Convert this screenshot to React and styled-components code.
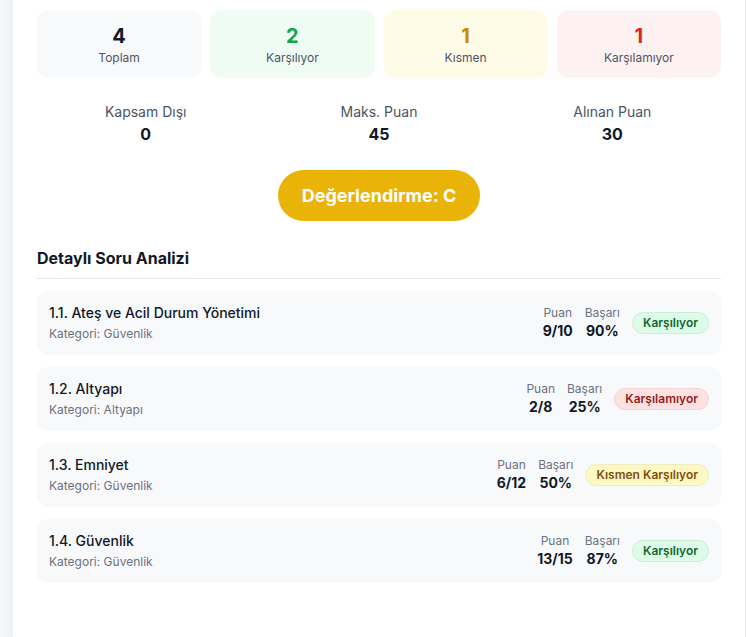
import React from 'react'
import styled, { createGlobalStyle } from 'styled-components'

const GlobalStyle = createGlobalStyle`
  body {
    margin: 0;
    background: #f5f6f8;
    font-family: Inter, "Noto Sans", "Liberation Sans", sans-serif;
    color: #111827;
  }
`;

const Page = styled.div`
  display: flex;
  min-height: 637px;
  padding-left: 13px;
`;

const Panel = styled.div`
  flex: 1;
  background: white;
  border-right: 1px solid #e5e7eb;
  box-shadow: -4px 0 10px rgba(0, 0, 0, 0.04);
  padding: 10px 24px 40px 24px;
`;

const StatGrid = styled.div`
  display: grid;
  grid-template-columns: repeat(4, 1fr);
  gap: 9px;
`;

const tones = {
  gray: { bg: '#f8f9fb', fg: '#111827' },
  green: { bg: '#effcf3', fg: '#16a34a' },
  yellow: { bg: '#fefbe7', fg: '#ca8a04' },
  red: { bg: '#fef1f1', fg: '#dc2626' },
};

const StatCard = styled.div`
  background: ${p => tones[p.$tone].bg};
  border-radius: 12px;
  padding: 12px;
  text-align: center;
`;

const StatNum = styled.div`
  font-size: 20px;
  line-height: 28px;
  font-weight: 700;
  color: ${p => tones[p.$tone].fg};
`;

const StatLabel = styled.div`
  font-size: 12px;
  line-height: 16px;
  color: #4b5563;
`;

const ScoreRow = styled.div`
  display: grid;
  grid-template-columns: repeat(3, 1fr);
  gap: 16px;
  margin-top: 24px;
  text-align: center;
`;

const ScoreLabel = styled.div`
  font-size: 14px;
  line-height: 20px;
  color: #4b5563;
`;

const ScoreValue = styled.div`
  font-size: 16px;
  line-height: 24px;
  font-weight: 700;
  color: #111827;
`;

const GradeWrap = styled.div`
  display: flex;
  justify-content: center;
  margin-top: 24px;
`;

const GradePill = styled.div`
  background: #eab308;
  color: white;
  font-size: 18px;
  line-height: 27px;
  font-weight: 700;
  padding: 12px 24px;
  border-radius: 999px;
`;

const SectionTitle = styled.h3`
  margin: 25px 0 0;
  font-size: 16px;
  line-height: 24px;
  font-weight: 700;
  color: #111827;
  padding-bottom: 8px;
  border-bottom: 1px solid #e2e8f0;
`;

const List = styled.div`
  display: flex;
  flex-direction: column;
  gap: 12px;
  margin-top: 12px;
`;

const Item = styled.div`
  display: flex;
  align-items: center;
  justify-content: space-between;
  background: #f8f9fb;
  border-radius: 10px;
  padding: 12px;
  height: 64px;
  box-sizing: border-box;
`;

const ItemInfo = styled.div`
  align-self: flex-start;
`;

const ItemTitle = styled.div`
  font-size: 14px;
  line-height: 20px;
  font-weight: 500;
  color: #111827;
`;

const ItemCat = styled.div`
  font-size: 12px;
  line-height: 16px;
  color: #6b7280;
  margin-top: 3px;
`;

const Right = styled.div`
  display: flex;
  align-items: center;
  gap: 12px;
`;

const Metric = styled.div`
  text-align: center;
`;

const MetricLabel = styled.div`
  font-size: 12px;
  line-height: 16px;
  color: #6b7280;
`;

const MetricValue = styled.div`
  font-size: 14px;
  line-height: 20px;
  font-weight: 700;
  color: #111827;
`;

const badgeTones = {
  green: { bg: '#dcfce7', fg: '#166534', bd: '#cdeed8' },
  red: { bg: '#fee2e2', fg: '#991b1b', bd: '#f3d6d6' },
  yellow: { bg: '#fef9c3', fg: '#854d0e', bd: '#f0ebc0' },
};

const Badge = styled.span`
  background: ${p => badgeTones[p.$tone].bg};
  color: ${p => badgeTones[p.$tone].fg};
  border: 1px solid ${p => badgeTones[p.$tone].bd};
  font-size: 12px;
  line-height: 18px;
  font-weight: 600;
  padding: 1px 10px;
  border-radius: 999px;
`;

const stats = [
  { n: 4, label: 'Toplam', tone: 'gray' },
  { n: 2, label: 'Karşılıyor', tone: 'green' },
  { n: 1, label: 'Kısmen', tone: 'yellow' },
  { n: 1, label: 'Karşılamıyor', tone: 'red' },
];

const questions = [
  { title: '1.1. Ateş ve Acil Durum Yönetimi', cat: 'Güvenlik', puan: '9/10', basari: '90%', status: 'Karşılıyor', tone: 'green' },
  { title: '1.2. Altyapı', cat: 'Altyapı', puan: '2/8', basari: '25%', status: 'Karşılamıyor', tone: 'red' },
  { title: '1.3. Emniyet', cat: 'Güvenlik', puan: '6/12', basari: '50%', status: 'Kısmen Karşılıyor', tone: 'yellow' },
  { title: '1.4. Güvenlik', cat: 'Güvenlik', puan: '13/15', basari: '87%', status: 'Karşılıyor', tone: 'green' },
];

const App = () => {
  return (
    <Page>
      <GlobalStyle />
      <Panel>
        <StatGrid>
          {stats.map(s => (
            <StatCard key={s.label} $tone={s.tone}>
              <StatNum $tone={s.tone}>{s.n}</StatNum>
              <StatLabel>{s.label}</StatLabel>
            </StatCard>
          ))}
        </StatGrid>

        <ScoreRow>
          <div>
            <ScoreLabel>Kapsam Dışı</ScoreLabel>
            <ScoreValue>0</ScoreValue>
          </div>
          <div>
            <ScoreLabel>Maks. Puan</ScoreLabel>
            <ScoreValue>45</ScoreValue>
          </div>
          <div>
            <ScoreLabel>Alınan Puan</ScoreLabel>
            <ScoreValue>30</ScoreValue>
          </div>
        </ScoreRow>

        <GradeWrap>
          <GradePill>Değerlendirme: C</GradePill>
        </GradeWrap>

        <SectionTitle>Detaylı Soru Analizi</SectionTitle>

        <List>
          {questions.map(q => (
            <Item key={q.title}>
              <ItemInfo>
                <ItemTitle>{q.title}</ItemTitle>
                <ItemCat>Kategori: {q.cat}</ItemCat>
              </ItemInfo>
              <Right>
                <Metric>
                  <MetricLabel>Puan</MetricLabel>
                  <MetricValue>{q.puan}</MetricValue>
                </Metric>
                <Metric>
                  <MetricLabel>Başarı</MetricLabel>
                  <MetricValue>{q.basari}</MetricValue>
                </Metric>
                <Badge $tone={q.tone}>{q.status}</Badge>
              </Right>
            </Item>
          ))}
        </List>
      </Panel>
    </Page>
  )
}

export default App
